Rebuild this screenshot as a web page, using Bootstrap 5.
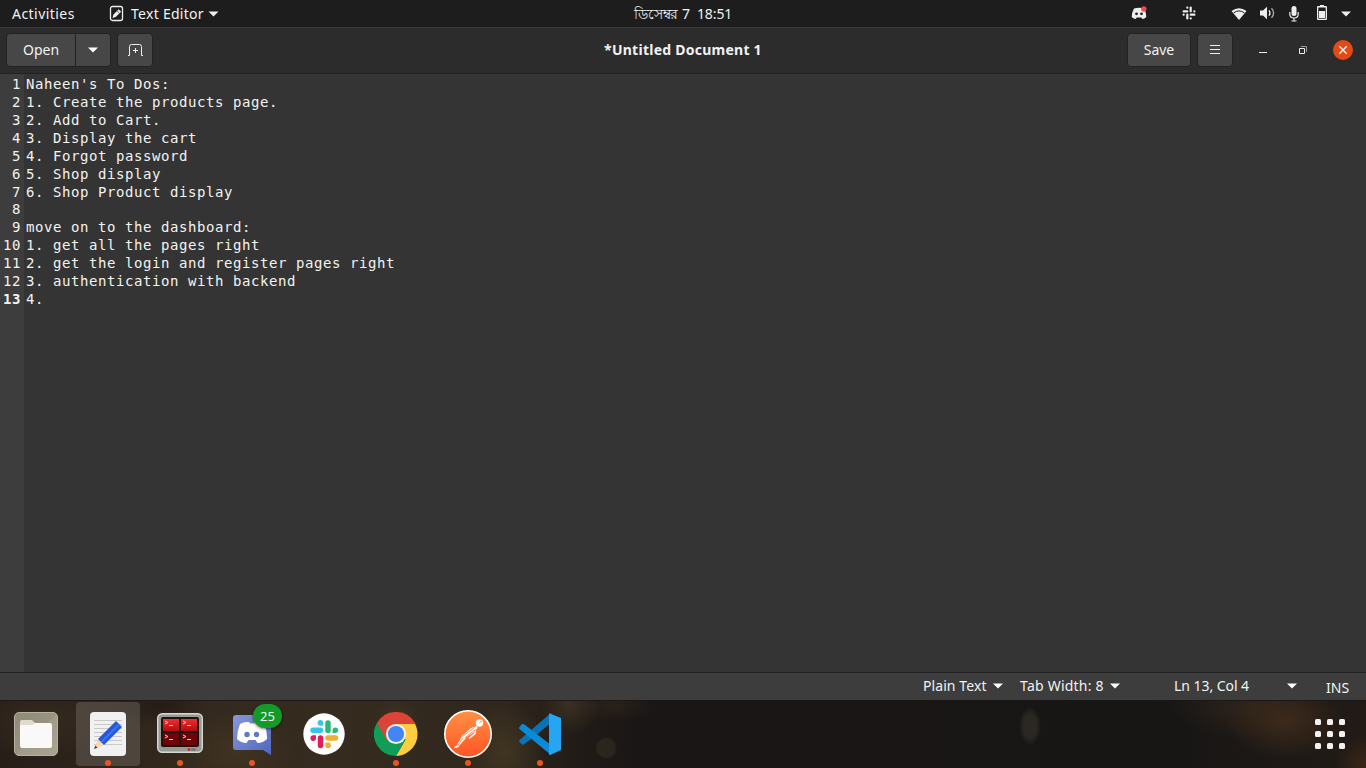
<!DOCTYPE html>
<html lang="en">
<head>
<meta charset="utf-8">
<meta name="viewport" content="width=device-width, initial-scale=1">
<title>*Untitled Document 1</title>
<link href="https://cdn.jsdelivr.net/npm/bootstrap@5.3.0/dist/css/bootstrap.min.css" rel="stylesheet">
<script src="https://cdn.jsdelivr.net/npm/bootstrap@5.3.0/dist/js/bootstrap.bundle.min.js" defer></script>
<style>
body{font:14px/20px "Noto Sans","Open Sans",sans-serif;color:#f2f2f0;background:#191615;height:100vh;overflow:hidden}
svg{display:block;flex:none}
.panel{height:27px;background:#1d1d1d;padding-left:12px}
.w-act{width:97px;letter-spacing:.45px}
.clock{left:0;right:0;top:4px;letter-spacing:-.1px}
.head{height:47px;background:#2c2c2c;border-top:1px solid #393939;border-bottom:1px solid #212121;padding:0 13px 2px 6px}
.doc-title{left:0;right:0;top:12px;font-weight:700;letter-spacing:.25px}
.btn-bar{--bs-btn-color:#f2f2f0;--bs-btn-bg:#474747;--bs-btn-border-color:#222;--bs-btn-hover-bg:#505050;--bs-btn-hover-color:#fff;--bs-btn-hover-border-color:#222;--bs-btn-padding-x:0;--bs-btn-padding-y:0;--bs-btn-font-size:14px;--bs-btn-border-radius:4px;height:34px;display:flex;align-items:center;justify-content:center;line-height:20px}
.editor{background:#343434;font-family:"DejaVu Sans Mono",monospace;font-size:14px;letter-spacing:.572px;white-space:pre}
.gutter{width:24px;background:#3d3d3d;padding:1px 3px 0 0;text-align:right}
.gutter div{margin-left:-4px}
.source{padding:1px 0 0 2px}
.editor .line{height:18px;line-height:19px}
.editor .line.blank{height:17px;line-height:17px}
.status{height:29px;background:#3d3d3d;border-top:1px solid #222;border-bottom:1px solid #1b1918;padding:0 16px 2px 0}
.dock{height:67px;padding:1px 4px 0;background:
 radial-gradient(ellipse 22px 28px at 396px 22px,#4a3d2480,transparent),
 radial-gradient(ellipse 60px 40px at 235px 50px,#4c3c2480,transparent),
 radial-gradient(ellipse 40px 50px at 505px 50px,#4c3f2599,transparent),
 radial-gradient(ellipse 30px 30px at 570px 4px,#453a27aa,transparent),
 radial-gradient(circle 11px at 606px 47px,#2b261d 80%,transparent),
 radial-gradient(ellipse 40px 15px at 615px 5px,#3c302266,transparent),
 radial-gradient(ellipse 11px 19px at 1030px 25px,#2b2823 60%,transparent),
 radial-gradient(ellipse 60px 38px at 1285px 20px,#3c2a1a,transparent),
 radial-gradient(ellipse 80px 34px at 1250px 4px,#33261ccc,transparent),
 radial-gradient(ellipse 30px 30px at 1366px 64px,#3b2618,transparent),
 radial-gradient(ellipse 50px 20px at 160px 5px,#1d1712aa,transparent),
 radial-gradient(ellipse 70px 40px at 40px 20px,#352a1f,transparent),
 linear-gradient(90deg,#271e18 0,#33291e 190px,#352b1f 340px,#30271d 500px,#211b17 580px,#1a1615 640px,#181615 1180px,#221b16 1366px)}
.app{width:64px;height:64px;border-radius:4px}
.app.active{background:#ffffff26}
.app.running::after{content:"";position:absolute;left:29px;bottom:0;width:6px;height:6px;border-radius:50%;background:#e95420}
.count{left:33px;top:2px;width:29px;height:24px;border-radius:12px;background:#139a27;font-size:13px;line-height:24px;box-shadow:0 1px 3px #0008}
</style>
</head>
<body class="d-flex flex-column">
<nav class="panel d-flex align-items-center position-relative flex-shrink-0">
  <span class="w-act">Activities</span>
  <svg width="15" height="17" viewBox="0 0 15 17"><rect x="1.5" y="1.5" width="12" height="14" rx="2" fill="none" stroke="#eee" stroke-width="1.3"/><path d="M3.5 13l.8-3.3 5.3-5.4 2.5 2.4-5.4 5.4z" fill="#eee"/><path d="M8 5.8l2.5 2.4" stroke="#222" stroke-width=".7"/></svg>
  <span style="margin-left:7px;letter-spacing:.28px">Text Editor</span>
  <svg class="ms-1" width="11" height="6"><path d="M.5.5h10l-5 5z" fill="#eee"/></svg>
  <span class="clock position-absolute text-center"><span lang="bn">ডিসেম্বর</span> 7&nbsp; 18:51</span>
  <div class="ms-auto d-flex align-items-center">
    <svg width="16" height="14" viewBox="0 0 16 14" style="margin-right:35px;margin-top:-2px"><path d="M3 2.500Q8 .8 13 2.500 15.500 7 15.300 11q-2 2-4 2l-1-1.600H5.700l-1 1.600q-2 0-4-2Q.5 7 3 2.500z" fill="#eee"/><circle cx="5.500" cy="7.800" r="1.400" fill="#222"/><circle cx="10.500" cy="7.800" r="1.400" fill="#222"/><circle cx="12.800" cy="3" r="2.700" fill="#ee4b4b"/></svg>
    <svg width="14" height="14" viewBox="0 0 14 14" style="margin-right:35px;margin-top:-1px"><g stroke="#eee" stroke-width="2.200" stroke-linecap="round"><path d="M5.300 1.600v.1M1.600 5.300h3.700M8.700 1.600v3.700M12.400 5.300h-.1M1.600 8.700h.1M5.300 8.700v3.700M8.700 8.700h3.700M8.700 12.400v-.1"/></g></svg>
    <svg width="16" height="14" viewBox="0 0 16 14" style="margin-right:13px"><path d="M.5 4Q8-1.600 15.500 4L8 13z" fill="#eee"/><path d="M2.700 5.800Q8 2 13.300 5.800" fill="none" stroke="#1d1d1d" stroke-width="1"/></svg>
    <svg width="15" height="14" viewBox="0 0 15 14" style="margin-right:14px;margin-top:-1px"><path d="M0 4.500h3L7 .8v12.400L3 9.500H0z" fill="#eee"/><path d="M9 4.300q2 2.700 0 5.400" fill="none" stroke="#eee" stroke-width="1.300"/><path d="M11.500 2.200q4.200 4.800 0 9.600" fill="none" stroke="#aaa" stroke-width="1.300"/></svg>
    <svg width="10" height="17" viewBox="0 0 10 17" style="margin-right:18px;margin-top:-1px"><rect x="2.500" y="1" width="5" height="10" rx="2.500" fill="#eee"/><path d="M.8 7v2q0 4 4.200 4t4.200-4V7M5 13v3M2.500 16h5" fill="none" stroke="#eee" stroke-width="1.200"/></svg>
    <svg width="10" height="15" viewBox="0 0 10 15" style="margin-right:14px;margin-top:-2px"><path d="M3 0h4v1h2q1 0 1 1v12q0 1-1 1H1q-1 0-1-1V2q0-1 1-1h2z" fill="#eee"/><path d="M1.300 2.500h7.400v11.200H1.300z" fill="#1d1d1d"/><path d="M2 6h6v7H2z" fill="#eee"/></svg>
    <svg width="10" height="6" style="margin-right:15px"><path d="M0 .5h10l-5 5z" fill="#eee"/></svg>
  </div>
</nav>
<header class="head d-flex align-items-center position-relative flex-shrink-0">
  <div class="btn-group">
    <button class="btn btn-bar" style="width:70px">Open</button>
    <button class="btn btn-bar" style="width:36px" aria-label="Recent files"><svg width="10" height="6"><path d="M0 .5h10l-5 5z" fill="#fff"/></svg></button>
  </div>
  <button class="btn btn-bar" style="width:36px;margin-left:6px" aria-label="New tab"><svg width="15" height="12" viewBox="0 0 15 12"><path d="M0 11.500h1.500v-9q0-2 2-2h8q2 0 2 2v9H15M7.500 4v5M5 6.500h5" fill="none" stroke="#eee"/></svg></button>
  <span class="doc-title position-absolute text-center pe-none">*Untitled Document 1</span>
  <button class="btn btn-bar ms-auto" style="width:64px">Save</button>
  <button class="btn btn-bar" style="width:36px;margin-left:6px" aria-label="Menu"><svg width="10" height="10"><path d="M0 .5h10M0 4.500h10M0 8.500h10" stroke="#eee"/></svg></button>
  <svg width="8" height="8" style="margin-left:26px"><path d="M0 6.500h8" stroke="#eee"/></svg>
  <svg width="8" height="8" style="margin-left:32px"><path d="M.5 2.500h5v5h-5z" fill="none" stroke="#eee"/><path d="M2 .5h5.500V6" fill="none" stroke="#999"/></svg>
  <svg width="20" height="20" style="margin-left:26px"><circle cx="10" cy="10" r="10" fill="#e24b17"/><path d="M6.300 6.300l7.400 7.400M13.700 6.300l-7.400 7.400" stroke="#fff" stroke-width="1.300"/></svg>
</header>
<main class="editor d-flex flex-grow-1">
  <div class="gutter"><div class="line">1</div><div class="line">2</div><div class="line">3</div><div class="line">4</div><div class="line">5</div><div class="line">6</div><div class="line">7</div><div class="line blank">8</div><div class="line">9</div><div class="line">10</div><div class="line">11</div><div class="line">12</div><div class="line fw-bold">13</div></div>
  <div class="source"><div class="line">Naheen's To Dos:</div><div class="line">1. Create the products page.</div><div class="line">2. Add to Cart.</div><div class="line">3. Display the cart</div><div class="line">4. Forgot password</div><div class="line">5. Shop display</div><div class="line">6. Shop Product display</div><div class="line blank"></div><div class="line">move on to the dashboard:</div><div class="line">1. get all the pages right</div><div class="line">2. get the login and register pages right</div><div class="line">3. authentication with backend</div><div class="line">4. </div></div>
</main>
<footer class="status d-flex align-items-center justify-content-end flex-shrink-0 text-nowrap">
  <span style="width:70px;letter-spacing:.08px">Plain Text</span>
  <svg width="10" height="6"><path d="M0 .5h10l-5 5z" fill="#fff"/></svg>
  <span style="width:90px;margin-left:17px;letter-spacing:.22px">Tab Width: 8</span>
  <svg width="10" height="6"><path d="M0 .5h10l-5 5z" fill="#fff"/></svg>
  <span style="width:113px;margin-left:54px;letter-spacing:-.05px">Ln 13, Col 4</span>
  <svg width="10" height="6"><path d="M0 .5h10l-5 5z" fill="#fff"/></svg>
  <span class="pt-1" style="width:24px;margin-left:29px">INS</span>
</footer>
<div class="dock d-flex gap-2 flex-shrink-0">
  <div class="app d-flex align-items-center justify-content-center position-relative">
    <svg width="44" height="44" viewBox="0 0 44 44"><defs><linearGradient id="fb" x2="1" y2="1"><stop stop-color="#8f8977"/><stop offset=".5" stop-color="#999381"/><stop offset=".5" stop-color="#a09a88"/><stop offset="1" stop-color="#aaa492"/></linearGradient></defs><rect x=".5" y=".5" width="43" height="43" rx="4.500" fill="url(#fb)" stroke="#b5b09f"/><path d="M6 10q0-2 2-2h10l4 4-2 5H6z" fill="#dfdacb"/><path d="M6 13h12l3-2h15q2 0 2 2v21q0 2-2 2H8q-2 0-2-2z" fill="#faf9f7"/></svg>
  </div>
  <div class="app active running d-flex align-items-center justify-content-center position-relative">
    <svg width="38" height="44" viewBox="0 0 38 44"><rect x="1" y="0" width="36" height="44" rx="4" fill="#f1f1f1"/><path d="M5 8.500h28M5 12.500h28M5 16.500h28M5 20.500h28M5 24.500h28M5 28.500h28M5 32.500h28" stroke="#c9c9c9"/><path d="M5 37l4-10 6 6z" fill="#fbd6b3"/><path d="M5 37l1.300-3.500 2.300 2.200z" fill="#444"/><path d="M9 27L27 9l6 6-18 18z" fill="#2459d8"/><path d="M11.500 29.500l18-18 1.500 1.500-18 18z" fill="#3c75ee"/></svg>
  </div>
  <div class="app running d-flex align-items-center justify-content-center position-relative">
    <svg width="46" height="40" viewBox="0 0 46 40" style="margin-top:-2px"><defs><linearGradient id="tr" x2="0" y2="1"><stop stop-color="#ef3030"/><stop offset="1" stop-color="#b50b10"/></linearGradient></defs><rect x=".7" y=".7" width="44.600" height="38.600" rx="4.500" fill="#989a94" stroke="#d6d8d2" stroke-width="1.400"/><rect x="4" y="4" width="38" height="30" rx="2" fill="#211"/><path d="M6 6h16v12H6zM24 6h16v12H24z" fill="url(#tr)"/><path d="M6 20h16v12H6zM24 20h16v12H24z" fill="#6e0407"/><path d="M8 8l3 1.500L8 11M12 12.500h4M26 8l3 1.500-3 1.500M30 12.500h4M8 22l3 1.500L8 25M12 26.500h4M26 22l3 1.500-3 1.500M30 26.500h4" fill="none" stroke="#fbcaca"/><circle cx="32" cy="36.500" r="1.300" fill="#e01010"/><rect x="34" y="35" width="5" height="3" rx="1.500" fill="#777973"/></svg>
  </div>
  <div class="app running d-flex align-items-center justify-content-center position-relative">
    <svg width="40" height="44" viewBox="0 0 40 44"><defs><linearGradient id="dc" x2="1" y2="1"><stop stop-color="#8797d6"/><stop offset="1" stop-color="#5068bd"/></linearGradient></defs><path d="M4 3h31q4 0 4 4v36l-8-5H4q-3 0-3-3V6q0-3 3-3z" fill="url(#dc)"/><path d="M8 12q4-2.500 9-2l1 1.500h4L23 10q5-.5 9 2 3.500 7 3 15-4 4-9.500 4l-2-3h-7l-2 3Q9 31 5 27q0-8 3-15z" fill="#fff"/><circle cx="15" cy="22.500" r="2.700" fill="#6278c4"/><circle cx="24.500" cy="22.500" r="2.700" fill="#6278c4"/></svg>
    <span class="count position-absolute text-center">25</span>
  </div>
  <div class="app d-flex align-items-center justify-content-center position-relative">
    <svg width="42" height="42" viewBox="0 0 42 42"><circle cx="21" cy="21" r="20.700" fill="#fff"/><g stroke-width="5.500" stroke-linecap="round" fill="none"><path d="M10 17.300h7.500" stroke="#36c5f0"/><path d="M25 10v7.500" stroke="#2eb67d"/><path d="M17.500 25v7.500" stroke="#e01e5a"/><path d="M25 25h7.500" stroke="#ecb22e"/></g><path d="M20.200 12.700h-3a2.800 2.800 0 1 1 3-2.800z" fill="#36c5f0"/><path d="M29.500 20v-3a2.800 2.800 0 1 1 2.800 3z" fill="#2eb67d"/><path d="M13 22.300v3a2.800 2.800 0 1 1-2.800-3z" fill="#e01e5a"/><path d="M22.300 29.600h3a2.800 2.800 0 1 1-3 2.800z" fill="#ecb22e"/></svg>
  </div>
  <div class="app running d-flex align-items-center justify-content-center position-relative">
    <svg width="44" height="44" viewBox="0 0 48 48"><path d="M44.800 13H24v11l10.400 6L24 48A24 24 0 0 0 44.800 13z" fill="#ffcd40"/><path d="M3.200 12A24 24 0 0 0 24 48l10.400-18L24 24z" fill="#0f9d58"/><path d="M3.200 12A24 24 0 0 1 44.800 12l.6 1H24v11L13.600 30z" fill="#db4437"/><circle cx="24" cy="24" r="11" fill="#f1f1f1"/><circle cx="24" cy="24" r="8.800" fill="#4285f4"/></svg>
  </div>
  <div class="app running d-flex align-items-center justify-content-center position-relative">
    <svg width="48" height="48" viewBox="0 0 48 48"><defs><linearGradient id="pm" x2="0" y2="1"><stop stop-color="#ff9145"/><stop offset="1" stop-color="#ff5425"/></linearGradient></defs><circle cx="24" cy="24" r="23.200" fill="url(#pm)" stroke="#fff" stroke-width="1.600"/><circle cx="35.500" cy="13" r="3.700" fill="#fff"/><path d="M35.500 12.800l2.600-2" stroke="#ff8040"/><path d="M33 16l-6 2-9 8 2.500 2.500 9-6 4-4.500z" fill="#fff"/><path d="M31.500 20.500l-.5 3-6 5" fill="none" stroke="#fff" stroke-width="1.500"/><path d="M18.500 25l-6 11 1.500 1 8-9z" fill="#fff"/><path d="M18.500 26.500l12-9M20.500 28l11-8.500M13.500 36l5-7.500" stroke="#ff7138" stroke-width=".8"/><path d="M10.500 37.500l4-1.200" stroke="#fff" stroke-width="1.600"/></svg>
  </div>
  <div class="app running d-flex align-items-center justify-content-center position-relative">
    <svg width="44" height="44" viewBox="0 0 44 44"><path d="M1.500 28L33 1v10L6.500 32q-1.500 1-3 0l-2-2q-.8-1 0-2z" fill="#0874b8"/><path d="M1.500 15l2-2.500q1.500-1 3 0L33 33v10L1.500 17q-.8-1 0-2z" fill="#0b8ad5"/><path d="M32 1.500L43 6v32l-11 5q-1 .4-1-1V3q0-2 1-1.500z" fill="#26a5f3"/></svg>
  </div>
  <div class="app ms-auto d-flex align-items-center justify-content-center">
    <svg width="30" height="30" viewBox="0 0 30 30" fill="#f2f1ef"><rect width="6" height="6" rx="1.500"/><rect x="12" width="6" height="6" rx="1.500"/><rect x="24" width="6" height="6" rx="1.500"/><rect y="12" width="6" height="6" rx="1.500"/><rect x="12" y="12" width="6" height="6" rx="1.500"/><rect x="24" y="12" width="6" height="6" rx="1.500"/><rect y="24" width="6" height="6" rx="1.500"/><rect x="12" y="24" width="6" height="6" rx="1.500"/><rect x="24" y="24" width="6" height="6" rx="1.500"/></svg>
  </div>
</div>
</body>
</html>
